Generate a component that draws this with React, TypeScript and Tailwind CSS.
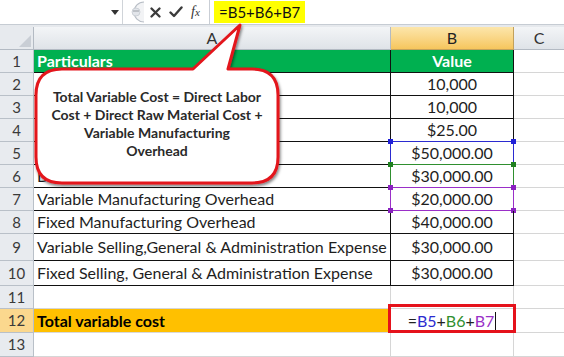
import React from "react"

type Row = {
	n: number
	a: string
	b: string
	h: string
	kind?: "head" | "data" | "blank" | "total"
	sel?: "blue" | "green" | "purple"
}

const rows: Row[] = [
	{ n: 1, a: "Particulars", b: "Value", h: "h-[23px]", kind: "head" },
	{ n: 2, a: "", b: "10,000", h: "h-[23px]", kind: "data" },
	{ n: 3, a: "", b: "10,000", h: "h-[23px]", kind: "data" },
	{ n: 4, a: "", b: "$25.00", h: "h-[23px]", kind: "data" },
	{ n: 5, a: "", b: "$50,000.00", h: "h-[23px]", kind: "data", sel: "blue" },
	{ n: 6, a: "Direct Raw Material Cost", b: "$30,000.00", h: "h-[23px]", kind: "data", sel: "green" },
	{ n: 7, a: "Variable Manufacturing Overhead", b: "$20,000.00", h: "h-[23px]", kind: "data", sel: "purple" },
	{ n: 8, a: "Fixed Manufacturing Overhead", b: "$40,000.00", h: "h-[23px]", kind: "data" },
	{ n: 9, a: "Variable Selling,General & Administration Expense", b: "$30,000.00", h: "h-[27px]", kind: "data" },
	{ n: 10, a: "Fixed Selling, General & Administration Expense", b: "$30,000.00", h: "h-[25px]", kind: "data" },
	{ n: 11, a: "", b: "", h: "h-[23px]", kind: "blank" },
	{ n: 12, a: "Total variable cost", b: "", h: "h-[24px]", kind: "total" },
	{ n: 13, a: "", b: "", h: "h-[24px]", kind: "blank" },
]

// selection outline colours for the referenced cells
const selStyle = {
	blue: { line: "border-[#2b2bd0]", dot: "bg-[#2020d8]" },
	green: { line: "border-[#2f8f2f]", dot: "bg-[#1f7f1f]" },
	purple: { line: "border-[#9a2fc8]", dot: "bg-[#8a22c0]" },
}

const Handles: React.FC<{ dot: string }> = ({ dot }) => (
	<>
		<span className={`absolute -left-[3px] -top-[3px] w-[5px] h-[5px] ${dot}`} />
		<span className={`absolute -right-[3px] -top-[3px] w-[5px] h-[5px] ${dot}`} />
		<span className={`absolute -left-[3px] -bottom-[3px] w-[5px] h-[5px] ${dot}`} />
		<span className={`absolute -right-[3px] -bottom-[3px] w-[5px] h-[5px] ${dot}`} />
	</>
)

const FormulaBar = () => (
	<div className="flex h-[25px] items-stretch bg-white border-b border-[#c6ccd3]">
		{/* name box */}
		<div className="relative w-[123px] border-r border-[#d0d4d9]">
			<svg className="absolute left-[111px] top-[10px]" width="8" height="5" viewBox="0 0 8 5">
				<path d="M0 0 L8 0 L4 5 Z" fill="#333" />
			</svg>
		</div>
		{/* grip + buttons */}
		<div className="relative flex w-[86px] items-center bg-white">
			<svg className="absolute left-[1px] top-[1px]" width="22" height="22" viewBox="0 0 22 22">
				<path d="M20 1 A10 10 0 0 0 20 21" fill="#f2f3f5" stroke="#b8bec6" strokeWidth="1.2" />
				<circle cx="12" cy="11" r="4" fill="#e2e5ea" stroke="#c5cad1" strokeWidth="0.8" />
				<circle cx="10" cy="10" r="0.8" fill="#8d949c" />
				<circle cx="12" cy="10" r="0.8" fill="#8d949c" />
				<circle cx="14" cy="10" r="0.8" fill="#8d949c" />
			</svg>
			<svg className="absolute left-[27px] top-[7px]" width="11" height="11" viewBox="0 0 11 11">
				<path d="M1.5 1.5 L9.5 9.5 M9.5 1.5 L1.5 9.5" stroke="#3b3b3b" strokeWidth="2.3" strokeLinecap="round" />
			</svg>
			<svg className="absolute left-[46px] top-[6px]" width="14" height="12" viewBox="0 0 14 12">
				<path d="M1.5 6.5 L5 10 L12.5 1.5" stroke="#3b3b3b" strokeWidth="2.4" fill="none" strokeLinejoin="round" strokeLinecap="round" />
			</svg>
			<span className="absolute left-[68px] top-[3px] font-['Liberation_Serif',serif] italic text-[14px] leading-[18px] text-[#333]">
				f<span className="text-[11px]">x</span>
			</span>
		</div>
		{/* formula input */}
		<div className="flex flex-1 items-center border-l border-[#c9ced5] pl-[4px]">
			<div className="flex h-[22px] items-center bg-[#ffff00] px-[5px] text-[15px] text-[#111]">=B5+B6+B7</div>
		</div>
	</div>
)

const HeaderRow = () => (
	<div className="flex h-[25px] border-t-[2px] border-[#e6e9ed]">
		<div className="relative w-[34px] border-r border-b border-[#b3bac3] bg-[#e7eaee]">
			<svg className="absolute right-[2px] bottom-[2px]" width="12" height="12" viewBox="0 0 12 12">
				<path d="M12 0 L12 12 L0 12 Z" fill="#c9ced5" />
			</svg>
		</div>
		<div className="flex w-[357px] items-center justify-center border-r border-b border-[#b3bac3] bg-linear-to-b from-[#f3f5f7] to-[#dfe3e8] text-[#333]">
			A
		</div>
		<div className="flex w-[123px] items-center justify-center border-r border-b border-[#c2a15c] bg-linear-to-b from-[#fce6ab] to-[#f6c65c] text-[#222]">
			B
		</div>
		<div className="flex flex-1 items-center justify-center border-b border-[#b3bac3] bg-linear-to-b from-[#f3f5f7] to-[#dfe3e8] text-[#333]">
			C
		</div>
	</div>
)

const SheetRow: React.FC<{ row: Row }> = ({ row }) => {
	const isHead = row.kind === "head"
	const isTotal = row.kind === "total"
	const framed = row.kind === "data" || isHead
	const line = framed ? "border-[#111]" : "border-[#d6d6d6]"
	const sel = row.sel ? selStyle[row.sel] : null

	return (
		<div className={`flex ${row.h}`}>
			<div
				className={`flex w-[34px] items-center justify-center border-r border-b border-[#b9c0c8] text-[15px] text-[#3a3a3a] ${
					isTotal ? "bg-[#fbd88e]" : "bg-[#e8ebef]"
				}`}
			>
				{row.n}
			</div>
			<div
				className={`flex w-[357px] items-center whitespace-nowrap overflow-hidden pl-[3px] border-r border-b ${line} ${
					isHead ? "bg-[#00b050] text-white font-bold" : isTotal ? "bg-[#ffc000] text-black font-bold border-[#d9d9d9]" : "text-[#1e1e1e]"
				}`}
			>
				{row.a}
			</div>
			<div
				className={`relative flex w-[123px] items-center justify-center border-r border-b ${line} ${
					isHead ? "bg-[#00b050] text-white font-bold" : "text-[#1e1e1e]"
				}`}
			>
				{isTotal ? (
					<>
						<span className="text-[#222]">=</span>
						<span className="text-[#2b2bd0]">B5</span>
						<span className="text-[#222]">+</span>
						<span className="text-[#2f8f2f]">B6</span>
						<span className="text-[#222]">+</span>
						<span className="text-[#9a2fc8]">B7</span>
						<span className="ml-[1px] h-[18px] w-[1px] bg-[#111]" />
						<span className="absolute -left-[3px] -top-[5px] -right-[3px] -bottom-[1px] border-[3px] border-[#e5121b]" />
					</>
				) : (
					row.b
				)}
				{sel && (
					<span className={`absolute -left-[1px] -top-[1px] right-[-1px] bottom-[-1px] border ${sel.line}`}>
						<Handles dot={sel.dot} />
					</span>
				)}
			</div>
			<div className="flex-1 border-b border-[#d6d6d6]" />
		</div>
	)
}

const Callout = () => (
	<>
		<svg className="pointer-events-none absolute left-0 top-0" width="564" height="357" viewBox="0 0 564 357">
			<defs>
				<filter id="sh" x="-10%" y="-10%" width="120%" height="130%">
					<feDropShadow dx="1" dy="2" stdDeviation="1.8" floodColor="#000" floodOpacity="0.5" />
				</filter>
			</defs>
			<path
				d="M62 69 L193 69 L240 25 L228 69 L252 69 Q278 69 278 95 L278 157 Q278 183 252 183 L62 183 Q36 183 36 157 L36 95 Q36 69 62 69 Z"
				fill="#ffffff"
				stroke="#e3151c"
				strokeWidth="3"
				strokeLinejoin="round"
				filter="url(#sh)"
			/>
		</svg>
		<div className="absolute left-[36px] top-[88px] w-[242px] text-center font-bold text-[14px] leading-[18px] text-[#2a2a2a]">
			Total Variable Cost = Direct Labor
			<br />
			Cost + Direct Raw Material Cost +
			<br />
			Variable Manufacturing
			<br />
			Overhead
		</div>
	</>
)

export default function App() {
	return (
		<div className="relative h-[357px] w-[564px] overflow-hidden bg-white font-[Lato,sans-serif] text-[16px]">
			<FormulaBar />
			<HeaderRow />
			{rows.map((r) => (
				<SheetRow key={r.n} row={r} />
			))}
			<Callout />
		</div>
	)
}
